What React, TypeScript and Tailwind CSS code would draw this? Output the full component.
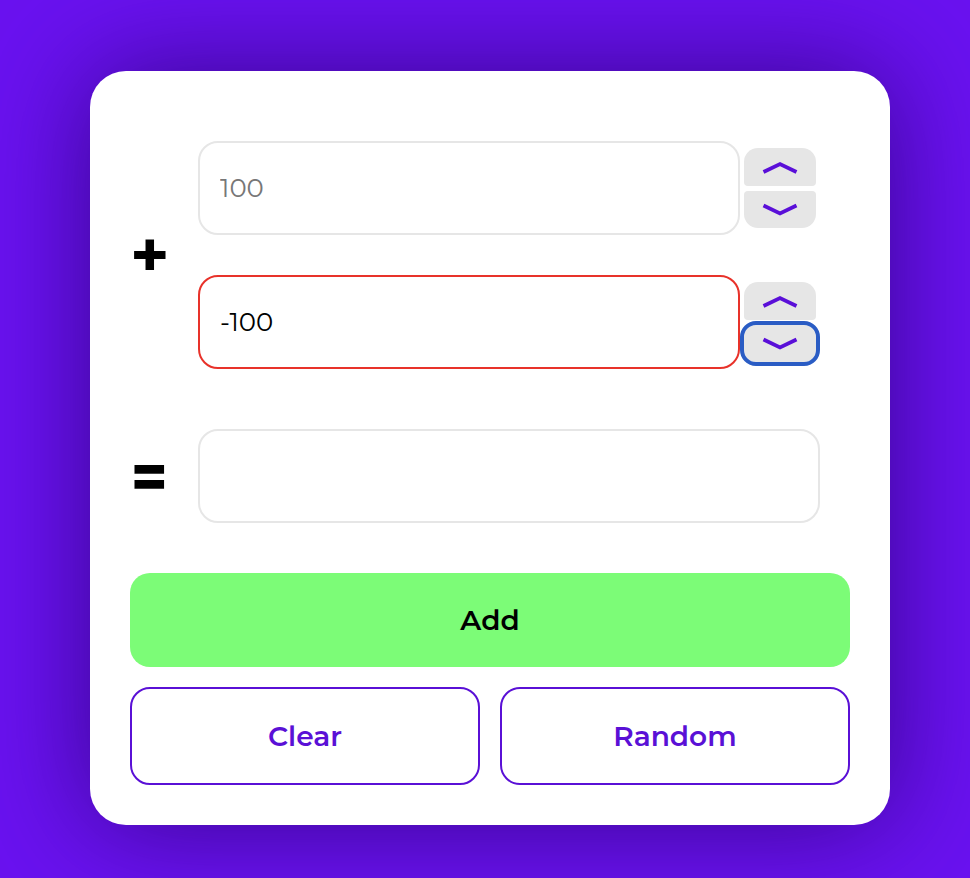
import React from "react";

const font = { fontFamily: "Montserrat, Inter, 'Noto Sans', sans-serif" };

function Chevron({ up }: { up?: boolean }) {
  return (
    <svg width="36" height="15" viewBox="0 0 36 15" fill="none">
      <path
        d={up ? "M1.5 12 L18 4 L34.5 12" : "M1.5 3.5 L18 11.5 L34.5 3.5"}
        stroke="#5a0fd8"
        strokeWidth="3.8"
        strokeLinecap="butt"
        strokeLinejoin="miter"
      />
    </svg>
  );
}

function Spinner({ focused }: { focused?: boolean }) {
  return (
    <div className="flex w-[72px] flex-col gap-[5px]">
      <button className="flex h-[38px] items-center justify-center rounded-t-[14px] rounded-b-[4px] bg-[#e6e6e6]">
        <Chevron up />
      </button>
      <button
        className={
          focused
            ? "flex h-[37px] items-center justify-center rounded-[12px] bg-[#e6e6e6] outline-[4px] outline-solid outline-[#2a5cc4] outline-offset-0"
            : "flex h-[37px] items-center justify-center rounded-t-[4px] rounded-b-[14px] bg-[#e6e6e6]"
        }
      >
        <Chevron />
      </button>
    </div>
  );
}

export default function App() {
  return (
    <div
      className="flex min-h-[878px] justify-center bg-[#6a12f0] pt-[71px] pl-[10px]"
      style={font}
    >
      <div className="flex h-[754px] w-[800px] flex-col rounded-[36px] bg-white px-10 pt-[70px] pb-10 shadow-[0_0_110px_rgba(40,0,110,0.75)]">
        <div className="flex items-center">
          <div className="w-[68px] text-[66px] leading-none font-bold text-black">
            +
          </div>
          <div className="flex flex-col gap-10">
            <div className="flex items-center gap-1">
              <input
                className="h-[94px] w-[542px] rounded-[20px] border-2 border-[#e6e6e6] px-5 text-[26px] text-black outline-none placeholder:text-[#777]"
                placeholder="100"
                style={font}
              />
              <Spinner />
            </div>
            <div className="flex items-center gap-1">
              <input
                className="h-[94px] w-[542px] rounded-[20px] border-2 border-[#e8322a] px-5 text-[26px] text-black outline-none"
                defaultValue="-100"
                style={font}
              />
              <Spinner focused />
            </div>
          </div>
        </div>

        <div className="mt-[60px] flex items-center">
          <div className="w-[68px] pl-[1px] text-[60px] leading-none font-extrabold text-black">
            =
          </div>
          <input
            className="h-[94px] w-[622px] rounded-[20px] border-2 border-[#e6e6e6] px-5 text-[26px] outline-none"
            style={font}
          />
        </div>

        <button className="mt-[50px] h-[94px] w-full rounded-[20px] bg-[#7cfc77] text-[28px] font-semibold text-black">
          Add
        </button>

        <div className="mt-5 grid grid-cols-2 gap-5">
          <button className="h-[98px] rounded-[20px] border-2 border-[#5a10d6] bg-white text-[28px] font-semibold text-[#5a10d6]">
            Clear
          </button>
          <button className="h-[98px] rounded-[20px] border-2 border-[#5a10d6] bg-white text-[28px] font-semibold text-[#5a10d6]">
            Random
          </button>
        </div>
      </div>
    </div>
  );
}
